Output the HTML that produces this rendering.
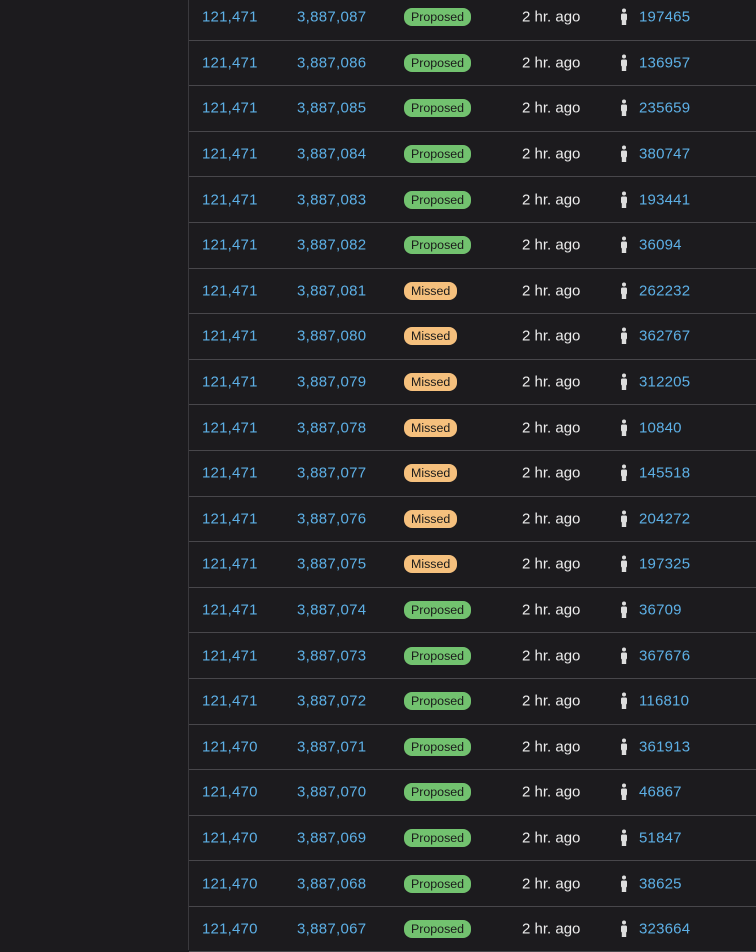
<!DOCTYPE html><html><head><style>
body{margin:0;width:756px;height:950px;overflow:hidden;background:#1c1b1e;font-family:"Liberation Sans",sans-serif;font-size:15px}
.side{position:absolute;left:0;top:0;width:188px;height:950px;background:#1c1b1e;border-right:1px solid #3a393d}
.t{position:absolute;left:189px;top:-5px;width:567px}
.r{height:44.6px;border-bottom:1px solid #48474b;position:relative}
.r span{position:absolute;top:50%;transform:translateY(-50%);white-space:nowrap}
.a{left:13px;color:#5db0e6;letter-spacing:.2px}.b{left:108px;color:#5db0e6;letter-spacing:.3px}
.c{left:215px;font-size:12.4px;line-height:14px;padding:2px 7px;border-radius:8px;color:#1a1a1a}
.p{background:#72c26f}.m{background:#f5c07d}
.d{left:333px;color:#ececec}.e{left:450px;color:#5db0e6;letter-spacing:.2px}
.i{left:431px;width:8px;height:18px}
</style></head><body><div class="side"></div><div class="t">
<script>
const rows=[["121,471","3,887,087","P","197465"],["121,471","3,887,086","P","136957"],["121,471","3,887,085","P","235659"],["121,471","3,887,084","P","380747"],["121,471","3,887,083","P","193441"],["121,471","3,887,082","P","36094"],["121,471","3,887,081","M","262232"],["121,471","3,887,080","M","362767"],["121,471","3,887,079","M","312205"],["121,471","3,887,078","M","10840"],["121,471","3,887,077","M","145518"],["121,471","3,887,076","M","204272"],["121,471","3,887,075","M","197325"],["121,471","3,887,074","P","36709"],["121,471","3,887,073","P","367676"],["121,471","3,887,072","P","116810"],["121,470","3,887,071","P","361913"],["121,470","3,887,070","P","46867"],["121,470","3,887,069","P","51847"],["121,470","3,887,068","P","38625"],["121,470","3,887,067","P","323664"]];
for(const r of rows){document.write(`<div class="r"><span class="a">${r[0]}</span><span class="b">${r[1]}</span><span class="c ${r[2]=="P"?"p":"m"}">${r[2]=="P"?"Proposed":"Missed"}</span><span class="d">2 hr. ago</span><span class="i"><svg width="8" height="18" viewBox="0 0 8 18"><circle cx="4" cy="2.5" r="2" fill="#ddd"/><rect x="1" y="5.5" width="6" height="7" rx="1.5" fill="#ddd"/><rect x="1.8" y="11" width="4.4" height="6" fill="#ddd"/></svg></span><span class="e">${r[3]}</span></div>`)}
</script></div></body></html>
